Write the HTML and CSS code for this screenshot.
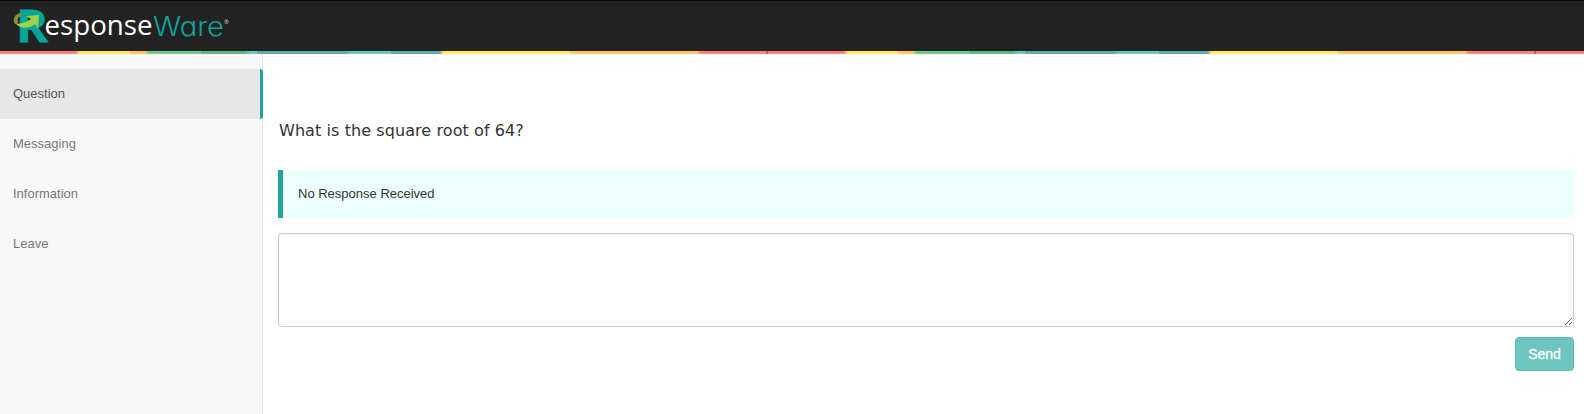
FILE: index.html
```
<!DOCTYPE html>
<html lang="en">
<head>
<meta charset="utf-8">
<title>ResponseWare</title>
<link rel="stylesheet" href="styles.css">
</head>
<body>
<header class="topbar">
  <svg class="logo" width="240" height="50" viewBox="0 0 240 50" role="img" aria-label="ResponseWare">
    <text class="logo-r" x="16" y="42" textLength="32" lengthAdjust="spacingAndGlyphs">R</text>
    <path d="M21 13C14 14 12 20 15 24L19 22C16 20 18 17 22 15Z" fill="#8a8f2c"/>
    <path d="M14 20C15 26 23 24 31 19L26 16L39 15L38 29L35 24C28 30 17 29 14 20Z" fill="#9fd34c"/>
    <text class="logo-light" x="44.5" y="35" textLength="108" lengthAdjust="spacingAndGlyphs">esponse</text>
    <text class="logo-ware" x="153" y="36" textLength="71" lengthAdjust="spacingAndGlyphs">Ware</text>
    <text class="logo-mark" x="224" y="24">®</text>
  </svg>
</header>
<div class="stripe"></div>
<div class="layout">
  <nav class="sidebar">
    <a class="item active">Question</a>
    <a class="item">Messaging</a>
    <a class="item">Information</a>
    <a class="item">Leave</a>
  </nav>
  <main class="content">
    <h1 class="question">What is the square root of 64?</h1>
    <div class="status">No Response Received</div>
    <textarea class="answer" aria-label="Answer"></textarea>
    <button class="send">Send</button>
  </main>
</div>
</body>
</html>
```
FILE: styles.css
```
* { box-sizing: border-box; }
body {
  margin: 0;
  height: 414px;
  overflow: hidden;
  display: flex;
  flex-direction: column;
  background: #fff;
  color: #333;
  font: 13px/20px "Liberation Sans", Arial, sans-serif;
}
.topbar { height: 51px; flex: none; background: #222; border-top: 1px solid #080808; }
.logo { display: block; margin-top: -1px; overflow: visible; }
.logo-r { font: bold 45px "Open Sans", sans-serif; fill: #04a59b; stroke: #04a59b; stroke-width: .8px; }
.logo-light { font: 28px "Open Sans", sans-serif; fill: #fff; }
.logo-ware { font: 300 27px Inter, sans-serif; font-feature-settings: "cv11", "ss01"; fill: #12a398; }
.logo-mark { font: 6px "Open Sans", sans-serif; fill: #ddd; }
.stripe {
  height: 3px;
  flex: none;
  background: linear-gradient(90deg,
    #f88379 0 76px, #ffe95a 79px 130px, #ffc466 130px 146px,
    #6dcb8b 148px 201px, #64b48a 201px 246px, #6cc7bf 250px 257px,
    #62a9b0 257px 346px, #6cc7bf 350px 391px, #62a9b0 391px 440px,
    #ffe95a 443px 570px, #ffc466 570px 697px, #f88379 701px 766px,
    #b8605c 766px 768px) 0 0 / 768px 3px repeat-x;
}
.layout { flex: 1; display: flex; }
.sidebar {
  width: 263px;
  padding-top: 15px;
  background: #f8f8f8;
  border-right: 1px solid #e7e7e7;
}
.item { display: block; height: 50px; padding: 15px 13px; color: #777; }
.active {
  margin-right: -1px;
  color: #555;
  background: #e7e7e7;
  border-right: 3px solid #1fa69a;
  border-radius: 0 3px 3px 0;
}
.content {
  flex: 1;
  display: flex;
  flex-direction: column;
  padding: 67px 10px 0 15px;
}
.question {
  margin: 0 0 29px;
  padding-left: 1px;
  font: 16px/20px "DejaVu Sans", Verdana, sans-serif;
  letter-spacing: .08px;
}
.status {
  height: 48px;
  padding: 14px 15px;
  border-left: 5px solid #1fa69a;
  background: #eeffff;
}
.answer {
  display: block;
  height: 94px;
  margin: 15px 0 10px;
  border: 1px solid #ccc;
  border-radius: 4px;
  box-shadow: inset 0 1px 1px rgba(0, 0, 0, .075);
  resize: vertical;
}
.send {
  align-self: flex-end;
  width: 59px;
  height: 34px;
  padding: 0;
  border: 1px solid #62b9b1;
  border-radius: 4px;
  background: #6cc5bf;
  color: #fff;
  font: 14px/20px "Liberation Sans", Arial, sans-serif;
  -webkit-text-stroke: .3px #fff;
}
```
